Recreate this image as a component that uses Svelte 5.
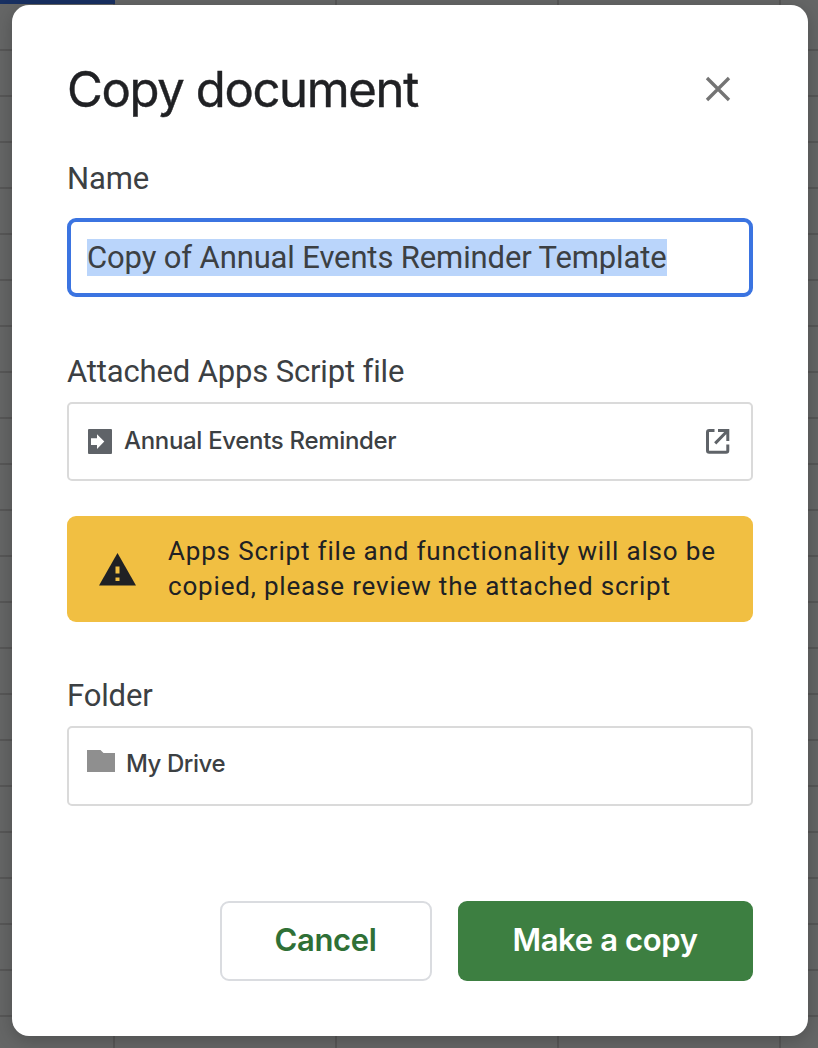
<script>
  let name = 'Copy of Annual Events Reminder Template';
</script>

<main class="backdrop">
  <div class="sheet-tab"></div>
  <section class="dialog" role="dialog" aria-labelledby="title">
    <header>
      <h1 id="title"><span>Copy document</span></h1>
      <button class="close" aria-label="Close">
        <svg width="26" height="26" viewBox="0 0 26 26"><path d="M2 2 24 24M24 2 2 24" fill="none" stroke="#747474" stroke-width="3.3" /></svg>
      </button>
    </header>

    <div class="label name-label"><span>Name</span></div>
    <div class="field name-field"><span class="selected">{name}</span></div>

    <div class="label script-label"><span>Attached Apps Script file</span></div>
    <div class="field script-field">
      <svg width="24" height="25" viewBox="0 0 24 25"><rect width="24" height="25" rx="1" fill="#5f6368" /><path d="M3 9.2h6V5.2l7.3 7.3L9 20v-4H3z" fill="#fff" /></svg>
      <span class="script-name">Annual Events Reminder</span>
      <svg class="open" width="24" height="25" viewBox="0 0 24 25">
        <path d="M8.5 1.5H3.2Q1.5 1.5 1.5 3.2V21.5Q1.5 23.2 3.2 23.2H20.1Q21.8 23.2 21.8 21.5V15.5M12 1.5H21.8V12M20.8 2.5 9.2 14.4" fill="none" stroke="#5f6368" stroke-width="3" />
      </svg>
    </div>

    <div class="warning">
      <svg width="37" height="33" viewBox="0 0 37 33"><path d="M18.5 0 37 32.5H0z" fill="#202124" /><path d="M16.5 13.5h4v7h-4zM16.5 24.5h4v3.5h-4z" fill="#f1bf42" /></svg>
      <p>Apps Script file and functionality will also be<br />copied, please review the attached script</p>
    </div>

    <div class="label folder-label"><span>Folder</span></div>
    <div class="field folder-field">
      <svg width="28" height="22" viewBox="0 0 28 22"><path d="M0 0H13.5L16.5 3H28V22H0z" fill="#8f8f8f" /></svg>
      <span class="folder-name">My Drive</span>
    </div>

    <footer>
      <button class="cancel"><span>Cancel</span></button>
      <button class="primary"><span>Make a copy</span></button>
    </footer>
  </section>
</main>

<style>
  :global(body) { margin: 0; }
  * { box-sizing: border-box; }
  .backdrop {
    position: relative;
    width: 818px;
    height: 1048px;
    padding: 5px 10px 12px 12px;
    overflow: hidden;
    background:
      repeating-linear-gradient(to bottom, transparent 0 44px, #575757 44px 46px) 0 5px / 100% 1100px no-repeat,
      repeating-linear-gradient(to right, transparent 0 220px, #575757 220px 222px) -107px 0 / 1200px 100% no-repeat,
      #656666;
    font-family: Roboto, sans-serif;
  }
  .sheet-tab { position: absolute; top: 0; left: 0; width: 115px; height: 4px; background: #183062; }
  .dialog {
    position: relative;
    display: flex;
    flex-direction: column;
    width: 796px;
    height: 1031px;
    padding: 0 55px;
    border-radius: 17px;
    background: #fff;
    box-shadow: 0 4px 18px rgba(0, 0, 0, 0.22);
  }
  header { display: flex; justify-content: space-between; height: 151px; padding: 55px 22px 0 0; }
  h1 {
    margin: 0;
    color: #202124;
    font: 400 49px/60px Inter, sans-serif;
    letter-spacing: -1.35px;
    -webkit-text-stroke: 0.4px #202124;
    white-space: nowrap;
  }
  button { font: inherit; }
  .close { display: block; width: 26px; height: 26px; margin-top: 16px; padding: 0; border: 0; background: none; }
  svg { display: block; flex: none; }
  .label { height: 40px; color: #3c4043; font-size: 31px; line-height: 46px; letter-spacing: -0.15px; white-space: nowrap; }
  .name-label { height: 62px; }
  .script-label { height: 53px; margin-top: 52px; }
  .folder-label { height: 53px; margin-top: 51px; }
  .field {
    display: flex;
    align-items: center;
    height: 79px;
    padding: 0 21px 2px 19px;
    border: 2px solid #dadada;
    border-radius: 5px;
    color: #3c4043;
    white-space: nowrap;
  }
  .name-field { padding: 0 16px; border: 4px solid #3b74e1; border-radius: 9px; font-size: 31px; letter-spacing: -0.13px; }
  .selected { height: 37px; line-height: 37px; background: #bad5fb; }
  .script-name, .folder-name { font: 550 24px/32px Inter, sans-serif; letter-spacing: -0.32px; }
  .script-name { margin-left: 12px; }
  .script-field svg { margin-top: 1px; }
  .script-field .open { margin-left: auto; }
  .warning {
    display: flex;
    align-items: center;
    gap: 32px;
    height: 106px;
    margin-top: 35px;
    padding-left: 32px;
    border-radius: 9px;
    background: #f1bf42;
    color: #202124;
  }
  .warning p { margin: 0; font-size: 26px; line-height: 35px; letter-spacing: 0.82px; white-space: nowrap; }
  .folder-field { height: 80px; padding: 0 18px 10px; }
  .folder-name { margin: 5px 0 0 11px; letter-spacing: -0.45px; }
  footer { display: flex; justify-content: flex-end; gap: 26px; margin-top: 95px; }
  footer button {
    height: 80px;
    padding: 0 1px 2px 0;
    border: 0;
    border-radius: 9px;
    font: 600 31px/40px Inter, sans-serif;
    letter-spacing: -0.35px;
    white-space: nowrap;
  }
  footer .cancel { width: 212px; border: 2px solid #dadce0; background: #fff; color: #2f7036; }
  .primary { width: 295px; background: #3d7f41; color: #fff; }
</style>
